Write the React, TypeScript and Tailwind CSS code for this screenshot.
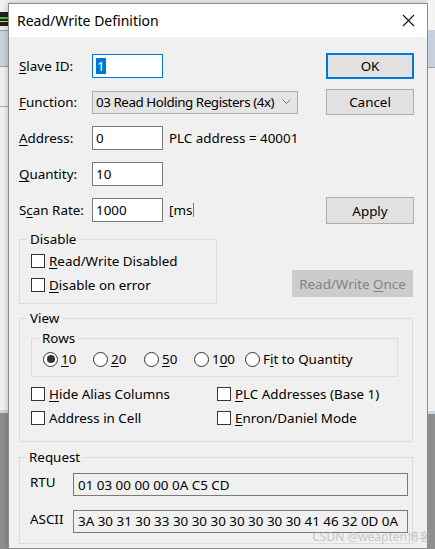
const FONT = { fontFamily: '"Noto Sans", "Liberation Sans", sans-serif' };

function U({ c }: { c: string }) {
  return <span className="underline underline-offset-[2px] decoration-1">{c}</span>;
}

function Check({ children }: { children: React.ReactNode }) {
  return (
    <div className="flex h-[24px] items-center">
      <div className="h-[14px] w-[14px] border border-[#333333] bg-white" />
      <span className="ml-[4px] whitespace-nowrap">{children}</span>
    </div>
  );
}

function Radio({ on, children, w }: { on?: boolean; children: React.ReactNode; w: string }) {
  return (
    <div className={`flex h-[24px] items-center ${w}`}>
      <div className="flex h-[15px] w-[15px] items-center justify-center rounded-full border border-[#333333] bg-white">
        {on && <div className="h-[8px] w-[8px] rounded-full bg-[#333333]" />}
      </div>
      <span className="ml-[3px] whitespace-nowrap">{children}</span>
    </div>
  );
}

function Field({ label, children }: { label: React.ReactNode; children: React.ReactNode }) {
  return (
    <div className="flex h-[24px] items-center">
      <div className="w-[73px] whitespace-nowrap">{label}</div>
      {children}
    </div>
  );
}

function Edit({ value, focus }: { value: React.ReactNode; focus?: boolean }) {
  return (
    <div
      className={`flex h-[24px] w-[71px] items-center border bg-white pl-[3px] ${
        focus ? "border-[#0078d7]" : "border-[#7a7a7a]"
      }`}
    >
      {value}
    </div>
  );
}

function Btn({ children, focus, disabled, cls }: { children: React.ReactNode; focus?: boolean; disabled?: boolean; cls: string }) {
  return (
    <div
      className={`flex items-center justify-center ${cls} ${
        disabled
          ? "border border-[#cccccc] bg-[#cccccc] text-[#838383]"
          : focus
          ? "border-2 border-[#0078d7] bg-[#e1e1e1]"
          : "border border-[#adadad] bg-[#e1e1e1]"
      }`}
    >
      {children}
    </div>
  );
}

export default function App() {
  return (
    <div className="flex h-[549px] w-[435px] overflow-hidden bg-[#f0f0f0] text-[13.4px] leading-[18px] text-black" style={FONT}>
      {/* background window, left edge */}
      <div className="flex w-[8px] flex-col">
        <div className="h-[12px] bg-[#f0f0f0]" />
        <div className="flex h-[14px] flex-col justify-center bg-[#202020]">
          <div className="h-[2px] bg-[#3fbf3f]" />
          <div className="mt-[2px] h-[1px] bg-[#e0d040]" />
        </div>
        <div className="h-[5px] border-b border-[#9a9a9a] bg-[#e8e8e8]" />
        <div className="h-[36px] border-b border-[#a0a0a0] bg-[#c9d3de]" />
        <div className="h-[40px] border-b border-[#a8a8a8] bg-[#f0f0f0]" />
        <div className="h-[303px] bg-[#f0f0f0]" />
        <div className="h-[3px] bg-[#c5d6e8]" />
        <div className="flex-1 bg-[#8e8e8e]" />
      </div>

      {/* dialog */}
      <div className="mt-[3px] flex w-[420px] flex-col border border-[#8c8c8c] bg-[#f0f0f0] shadow-[0_0_6px_rgba(0,0,0,0.25)]">
        <div className="flex h-[33px] items-center justify-between bg-white pl-[8px] pr-[12px]">
          <span className="text-[14px]">Read/Write Definition</span>
          <svg width="13" height="13" viewBox="0 0 13 13" className="mb-[1px]">
            <path d="M1 1 L12 12 M12 1 L1 12" stroke="#111" strokeWidth="1.1" />
          </svg>
        </div>

        <div className="flex flex-col pl-[10px] pt-[16px]">
          {/* top form + buttons */}
          <div className="flex">
            <div className="flex w-[307px] flex-col gap-[12px] pt-[1px]">
              <Field label={<><U c="S" />lave ID:</>}>
                <Edit focus value={<span className="bg-[#0078d7] px-[1px] leading-[16px] text-white">1</span>} />
              </Field>
              <Field label={<><U c="F" />unction:</>}>
                <div className="flex h-[23px] w-[206px] items-center justify-between border border-[#adadad] bg-[#e5e5e5] pl-[3px] pr-[6px]">
                  <span className="whitespace-nowrap tracking-[-0.45px]">03 Read Holding Registers (4x)</span>
                  <svg width="9" height="6" viewBox="0 0 9 6" className="shrink-0">
                    <path d="M0.5 0.5 L4.5 4.5 L8.5 0.5" fill="none" stroke="#777" strokeWidth="1" />
                  </svg>
                </div>
              </Field>
              <Field label={<><U c="A" />ddress:</>}>
                <Edit value="0" />
                <span className="ml-[6px] whitespace-nowrap">PLC address = 40001</span>
              </Field>
              <Field label={<><U c="Q" />uantity:</>}>
                <Edit value="10" />
              </Field>
              <Field label={<>S<U c="c" />an Rate:</>}>
                <Edit value="1000" />
                <span className="ml-[6px] whitespace-nowrap">[ms</span>
                <span className="ml-[1px] h-[14px] w-[1px] bg-[#777]" />
              </Field>
            </div>
            <div className="flex w-[88px] flex-col">
              <Btn focus cls="h-[26px]">OK</Btn>
              <Btn cls="mt-[10px] h-[26px]">Cancel</Btn>
              <Btn cls="mt-[82px] h-[27px]">Apply</Btn>
            </div>
          </div>

          {/* disable */}
          <div className="mt-[7px] flex">
            <fieldset className="w-[198px] border border-[#dcdcdc] pb-[6px] pl-[11px] pt-[2px]">
              <legend className="-ml-[4px] px-[3px] leading-[16px]">Disable</legend>
              <Check><U c="R" />ead/Write Disabled</Check>
              <Check><U c="D" />isable on error</Check>
            </fieldset>
            <Btn disabled cls="ml-[75px] mt-[39px] h-[27px] w-[121px]">
              <span>Read/Write <U c="O" />nce</span>
            </Btn>
          </div>

          {/* view */}
          <fieldset className="mt-[6px] w-[394px] border border-[#dcdcdc] pb-[11px] pl-[11px]">
            <legend className="-ml-[4px] px-[3px] leading-[16px]">View</legend>
            <fieldset className="mt-[4px] w-[367px] border border-[#dcdcdc] pb-[5px] pl-[11px] pt-[1px]">
              <legend className="-ml-[4px] px-[3px] leading-[16px]">Rows</legend>
              <div className="flex">
                <Radio on w="w-[50px]"><U c="1" />0</Radio>
                <Radio w="w-[51px]"><U c="2" />0</Radio>
                <Radio w="w-[50px]"><U c="5" />0</Radio>
                <Radio w="w-[51px]">1<U c="0" />0</Radio>
                <Radio w="w-[110px]">F<U c="i" />t to Quantity</Radio>
              </div>
            </fieldset>
            <div className="mt-[5px] grid grid-cols-[186px_1fr]">
              <Check><U c="H" />ide Alias Columns</Check>
              <Check><U c="P" />LC Addresses (Base 1)</Check>
              <Check>Address in Cell</Check>
              <Check><U c="E" />nron/Daniel Mode</Check>
            </div>
          </fieldset>

          {/* request */}
          <fieldset className="relative mt-[7px] w-[394px] border border-[#dcdcdc] pb-[10px] pl-[10px] pt-[8px]">
            <legend className="-ml-[4px] px-[3px] leading-[16px]">Request</legend>
            <div className="flex">
              <span className="w-[43px]">RTU</span>
              <div className="flex h-[23px] w-[335px] items-center border border-[#7a7a7a] bg-[#f0f0f0] pl-[4px]">
                01 03 00 00 00 0A C5 CD
              </div>
            </div>
            <div className="mt-[14px] flex">
              <span className="w-[43px]">ASCII</span>
              <div className="flex h-[23px] w-[335px] items-center whitespace-nowrap border border-[#7a7a7a] bg-[#f0f0f0] pl-[4px] leading-[15px]">
                3A 30 31 30 33 30 30 30 30 30 30 30 41 46 32 0D 0A
              </div>
            </div>
          </fieldset>
        </div>
      </div>

      {/* background window, right edge */}
      <div className="relative flex w-[7px] flex-col">
        <div className="h-[30px] bg-[#f4f4f4]" />
        <div className="h-[38px] border-b border-[#a0a0a0] bg-[#c6d1dd]" />
        <div className="h-[343px] bg-[#f0f0f0]" />
        <div className="h-[3px] bg-[#c5d6e8]" />
        <div className="flex-1 bg-[#8e8e8e]" />
        {/* faint site watermark over the screenshot corner */}
        <span className="pointer-events-none absolute right-[4px] top-[531px] whitespace-nowrap text-[12px] leading-[12px] text-[#a8a8a8] opacity-60">
          CSDN @weapten博客
        </span>
      </div>
    </div>
  );
}
